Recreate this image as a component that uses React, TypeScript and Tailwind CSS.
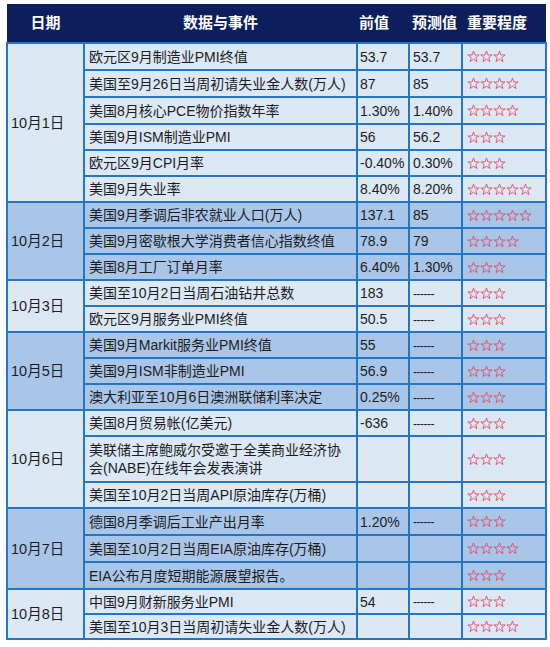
import React from 'react';

type Row = { event: React.ReactNode; prev: string; forecast: string; stars: number; h: number };
type Group = { date: string; blue: boolean; rows: Row[] };

const groups: Group[] = [
  {
    date: '10月1日',
    blue: false,
    rows: [
      { event: '欧元区9月制造业PMI终值', prev: '53.7', forecast: '53.7', stars: 3, h: 27 },
      { event: '美国至9月26日当周初请失业金人数(万人)', prev: '87', forecast: '85', stars: 4, h: 27 },
      { event: '美国8月核心PCE物价指数年率', prev: '1.30%', forecast: '1.40%', stars: 4, h: 27 },
      { event: '美国9月ISM制造业PMI', prev: '56', forecast: '56.2', stars: 3, h: 26 },
      { event: '欧元区9月CPI月率', prev: '-0.40%', forecast: '0.30%', stars: 3, h: 26 },
      { event: '美国9月失业率', prev: '8.40%', forecast: '8.20%', stars: 5, h: 26 },
    ],
  },
  {
    date: '10月2日',
    blue: true,
    rows: [
      { event: '美国9月季调后非农就业人口(万人)', prev: '137.1', forecast: '85', stars: 5, h: 26 },
      { event: '美国9月密歇根大学消费者信心指数终值', prev: '78.9', forecast: '79', stars: 4, h: 26 },
      { event: '美国8月工厂订单月率', prev: '6.40%', forecast: '1.30%', stars: 3, h: 26 },
    ],
  },
  {
    date: '10月3日',
    blue: false,
    rows: [
      { event: '美国至10月2日当周石油钻井总数', prev: '183', forecast: '------', stars: 3, h: 26 },
      { event: '欧元区9月服务业PMI终值', prev: '50.5', forecast: '------', stars: 3, h: 26 },
    ],
  },
  {
    date: '10月5日',
    blue: true,
    rows: [
      { event: '美国9月Markit服务业PMI终值', prev: '55', forecast: '------', stars: 3, h: 26 },
      { event: '美国9月ISM非制造业PMI', prev: '56.9', forecast: '------', stars: 3, h: 26 },
      { event: '澳大利亚至10月6日澳洲联储利率决定', prev: '0.25%', forecast: '------', stars: 3, h: 26 },
    ],
  },
  {
    date: '10月6日',
    blue: false,
    rows: [
      { event: '美国8月贸易帐(亿美元)', prev: '-636', forecast: '------', stars: 3, h: 26 },
      {
        event: (
          <>
            美联储主席鲍威尔受邀于全美商业经济协
            <br />
            会(NABE)在线年会发表演讲
          </>
        ),
        prev: '',
        forecast: '',
        stars: 3,
        h: 46,
      },
      { event: '美国至10月2日当周API原油库存(万桶)', prev: '', forecast: '', stars: 3, h: 26 },
    ],
  },
  {
    date: '10月7日',
    blue: true,
    rows: [
      { event: '德国8月季调后工业产出月率', prev: '1.20%', forecast: '------', stars: 3, h: 27 },
      { event: '美国至10月2日当周EIA原油库存(万桶)', prev: '', forecast: '', stars: 4, h: 27 },
      { event: 'EIA公布月度短期能源展望报告。', prev: '', forecast: '', stars: 3, h: 27 },
    ],
  },
  {
    date: '10月8日',
    blue: false,
    rows: [
      { event: '中国9月财新服务业PMI', prev: '54', forecast: '------', stars: 3, h: 25 },
      { event: '美国至10月3日当周初请失业金人数(万人)', prev: '', forecast: '', stars: 4, h: 25 },
    ],
  },
];

const font = { fontFamily: '"Liberation Sans", "Noto Sans CJK SC", sans-serif' };

// hollow five point star, 13px cell
const Star = () => (
  <svg width="13" height="13" viewBox="0 0 24 24" className="block">
    <path
      d="M12 1.8 L14.6 9.1 L22.4 9.2 L16.2 13.9 L18.4 21.4 L12 17 L5.6 21.4 L7.8 13.9 L1.6 9.2 L9.4 9.1 Z"
      fill="none"
      stroke="#e04a66"
      strokeWidth="1.6"
      strokeLinejoin="miter"
    />
  </svg>
);

const Stars = ({ n }: { n: number }) => (
  <div className="flex items-center">
    {Array.from({ length: n }).map((_, i) => (
      <Star key={i} />
    ))}
  </div>
);

export default function App() {
  return (
    <div className="w-[550px] h-[647px] bg-white pt-[4px] pl-[6px]" style={font}>
      <table className="border-collapse w-[539px] table-fixed text-[14px] text-[#1d1d1d] leading-[18px]">
        <colgroup>
          <col className="w-[77px]" />
          <col className="w-[273px]" />
          <col className="w-[52px]" />
          <col className="w-[53px]" />
          <col className="w-[84px]" />
        </colgroup>
        <thead>
          <tr className="h-[39px] bg-[#0c1f5c] text-white font-bold text-[15px]">
            <th className="text-center font-bold">日期</th>
            <th className="text-center font-bold">数据与事件</th>
            <th className="text-left font-bold pl-[2px]">前值</th>
            <th className="text-left font-bold pl-[3px]">预测值</th>
            <th className="text-left font-bold pl-[5px]">重要程度</th>
          </tr>
        </thead>
        <tbody>
          {groups.map((g) => {
            const bg = g.blue ? 'bg-[#a9c5e8]' : 'bg-[#dce7f4]';
            return g.rows.map((r, i) => (
              <tr key={g.date + i} className={bg} style={{ height: r.h }}>
                {i === 0 && (
                  <td
                    rowSpan={g.rows.length}
                    className="border-2 border-[#2475c2] pl-[3px] align-middle whitespace-nowrap text-[14.5px]"
                  >
                    {g.date}
                  </td>
                )}
                <td className="border-2 border-[#2475c2] pl-[4px] align-middle">{r.event}</td>
                <td className="border-2 border-[#2475c2] pl-[2px] align-middle">{r.prev}</td>
                <td className="border-2 border-[#2475c2] pl-[3px] align-middle">
                  {r.forecast === '------' ? <span className="text-[12px] tracking-[-0.5px]">------</span> : r.forecast}
                </td>
                <td className="border-2 border-[#2475c2] pl-[4px] align-middle">
                  <Stars n={r.stars} />
                </td>
              </tr>
            ));
          })}
        </tbody>
      </table>
    </div>
  );
}
